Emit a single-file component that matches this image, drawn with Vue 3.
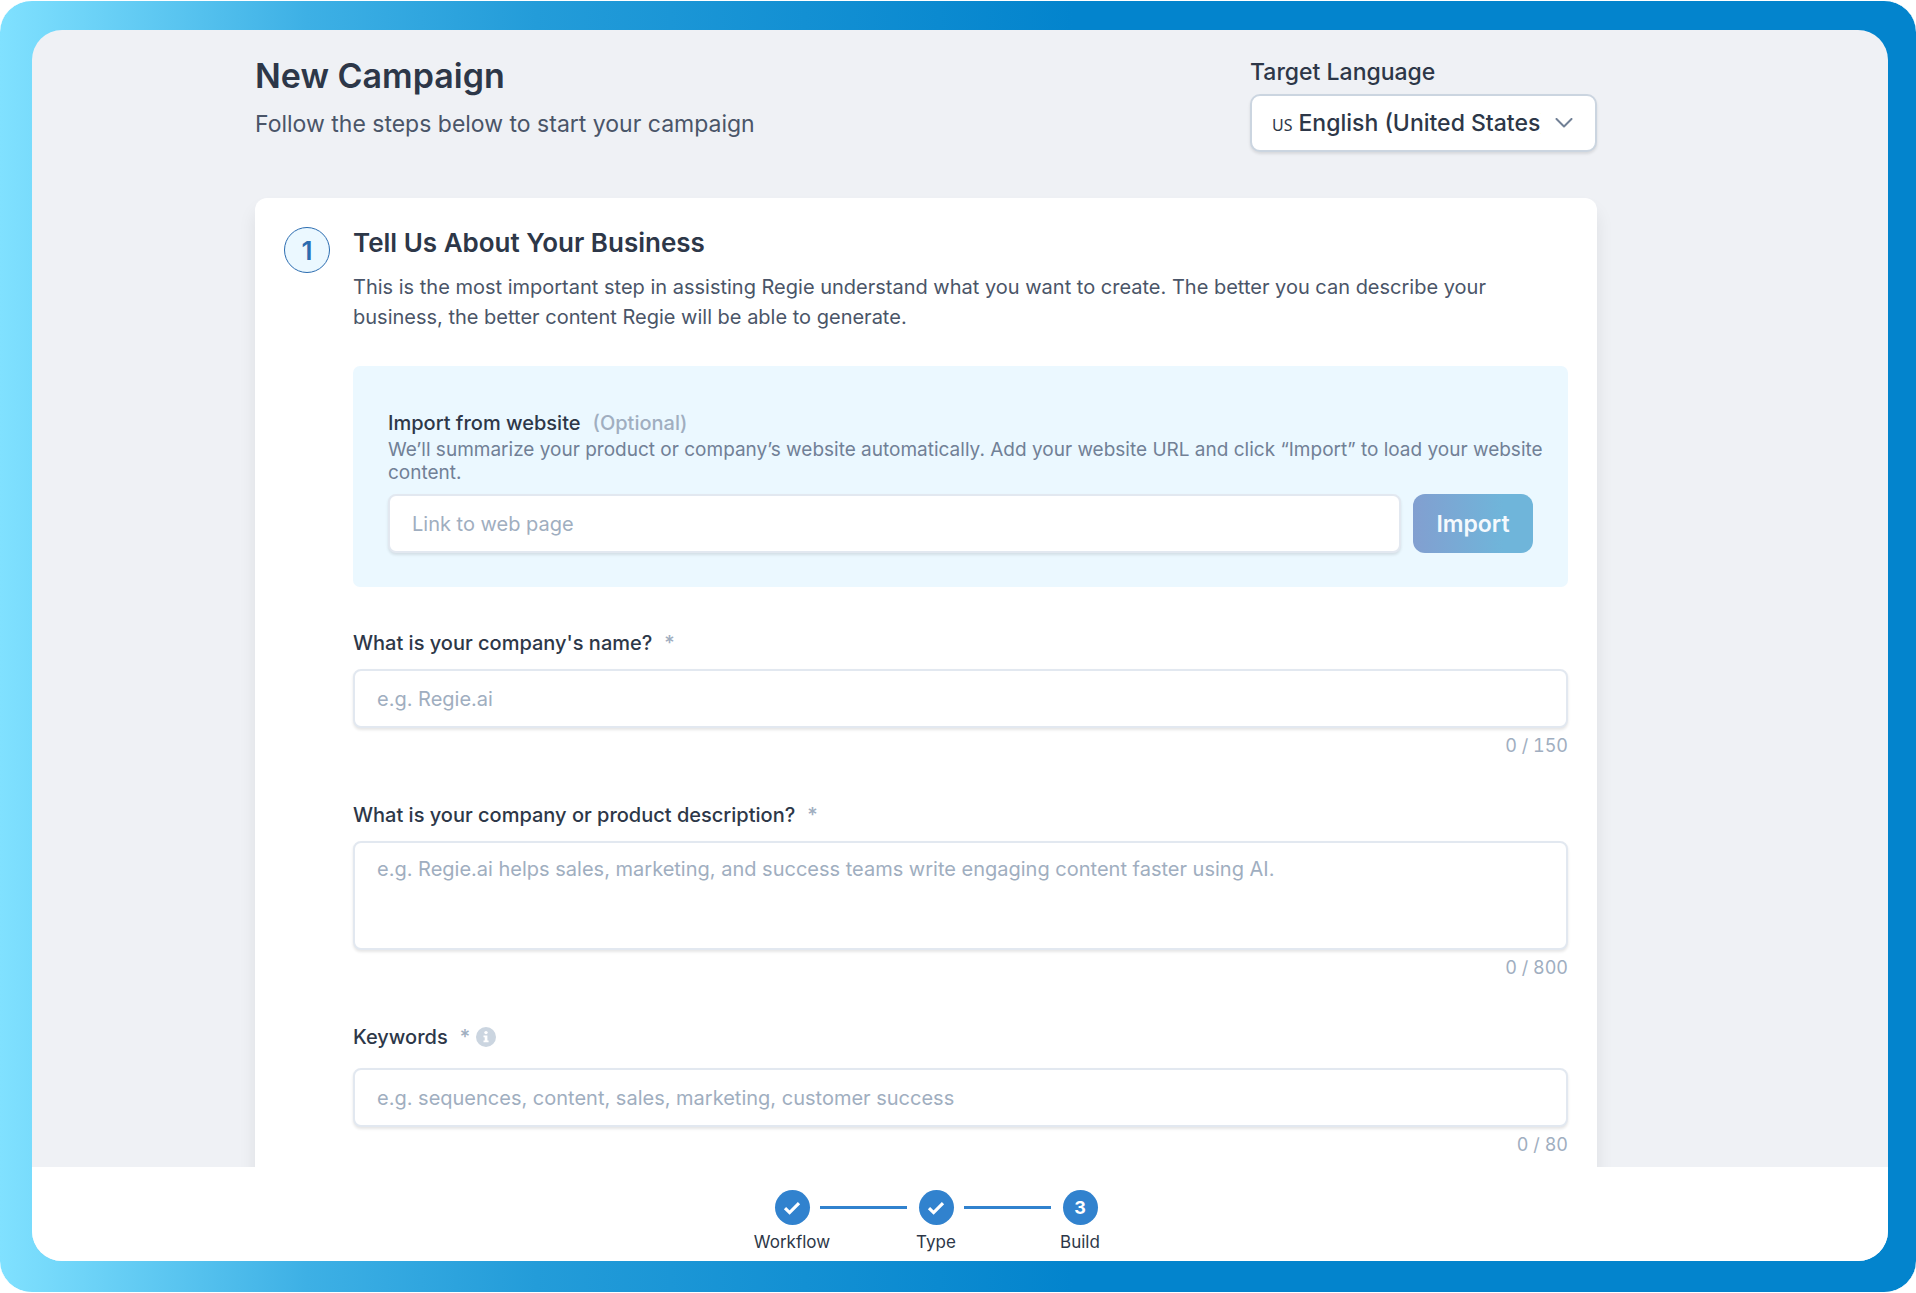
<script setup>
import { ref } from 'vue'

const language = ref('en-US')
const website = ref('')
const company = ref('')
const description = ref('')
const keywords = ref('')

const steps = [
  { label: 'Workflow', done: true },
  { label: 'Type', done: true },
  { label: 'Build', done: false },
]
</script>

<template>
  <div class="frame">
    <div class="window">
      <main class="content">
        <header class="page-head">
          <div>
            <h1>New Campaign</h1>
            <p class="subtitle">Follow the steps below to start your campaign</p>
          </div>
          <div class="language">
            <label for="language">Target Language</label>
            <div class="select-box">
              <span class="region">US</span>
              <select id="language" v-model="language">
                <option value="en-US">English (United States)</option>
                <option value="en-GB">English (United Kingdom)</option>
              </select>
              <svg class="chevron" viewBox="0 0 18 10" aria-hidden="true">
                <path d="M1.5 1 9 8.500 16.500 1" fill="none" stroke="currentColor" stroke-width="2" stroke-linecap="round" stroke-linejoin="round" />
              </svg>
            </div>
          </div>
        </header>

        <section class="card">
          <div class="number">1</div>
          <form class="form" @submit.prevent>
            <h2>Tell Us About Your Business</h2>
            <p class="intro">
              This is the most important step in assisting Regie understand what you want to create. The better you can describe your business, the better content Regie will be able to generate.
            </p>

            <div class="import">
              <label for="website">Import from website <span class="muted">(Optional)</span></label>
              <p class="hint">
                We’ll summarize your product or company’s website automatically. Add your website URL and click “Import” to load your website content.
              </p>
              <div class="import-row">
                <input id="website" v-model="website" class="control" type="text" placeholder="Link to web page" />
                <button type="button">Import</button>
              </div>
            </div>

            <div class="field">
              <label for="company">What is your company's name? <span class="muted">*</span></label>
              <input id="company" v-model="company" class="control" type="text" maxlength="150" placeholder="e.g. Regie.ai" />
              <p class="count">{{ company.length }} / 150</p>
            </div>

            <div class="field">
              <label for="description">What is your company or product description? <span class="muted">*</span></label>
              <textarea id="description" v-model="description" class="control" maxlength="800" placeholder="e.g. Regie.ai helps sales, marketing, and success teams write engaging content faster using AI."></textarea>
              <p class="count">{{ description.length }} / 800</p>
            </div>

            <div class="field keywords">
              <label for="keywords">
                Keywords <span class="muted">*</span>
                <svg class="info" viewBox="0 0 20 20" aria-hidden="true">
                  <circle cx="10" cy="10" r="10" fill="#cbd5e0" />
                  <circle cx="10" cy="5.600" r="1.700" fill="#fff" />
                  <path d="M7.500 8.500h3.900v5h1.200v1.800H7.500v-1.800h1.200v-3.200H7.500z" fill="#fff" />
                </svg>
              </label>
              <input id="keywords" v-model="keywords" class="control" type="text" maxlength="80" placeholder="e.g. sequences, content, sales, marketing, customer success" />
              <p class="count">{{ keywords.length }} / 80</p>
            </div>
          </form>
        </section>
      </main>

      <footer>
        <ol class="steps">
          <li v-for="(step, i) in steps" :key="step.label">
            <span class="dot">
              <svg v-if="step.done" viewBox="0 0 18 14" aria-hidden="true">
                <path d="M2 7.200 6.600 11.600 16 2.200" fill="none" stroke="currentColor" stroke-width="3.200" />
              </svg>
              <template v-else>{{ i + 1 }}</template>
            </span>
            <span class="step-label">{{ step.label }}</span>
          </li>
        </ol>
      </footer>
    </div>
  </div>
</template>

<style>
body {
  margin: 0;
  background: #fff;
}
</style>

<style scoped>
* {
  box-sizing: border-box;
}

.frame {
  height: 100vh;
  padding: 29px 28px 31px 32px;
  border: solid #fff;
  border-width: 1px 0;
  border-radius: 32px;
  background: linear-gradient(90deg, #80e1ff 0, #3db0e5 16%, #239cd9 28%, #0384cd 56%, #0384cd 100%);
  font-family: Inter, "Liberation Sans", sans-serif;
  color: #2d3748;
}

.window {
  display: flex;
  flex-direction: column;
  height: 100%;
  border-radius: 30px;
  background: #eff1f5;
  overflow: hidden;
}

h1,
h2,
p,
ol {
  margin: 0;
}

.content {
  flex: 1;
  min-height: 0;
  padding: 24px 291px 0 223px;
  overflow: hidden;
}

.page-head {
  display: flex;
  justify-content: space-between;
  margin-bottom: 46px;
}

h1 {
  font-size: 34px;
  font-weight: 600;
  line-height: 44px;
}

.subtitle {
  margin-top: 9px;
  font-size: 23px;
  line-height: 34px;
  color: #4a5568;
}

.language {
  width: 347px;
}

.language label {
  display: block;
  padding-top: 2px;
  font-size: 23px;
  font-weight: 500;
  line-height: 32px;
}

.select-box {
  display: flex;
  align-items: center;
  height: 58px;
  margin-top: 6px;
  padding: 0 22px 0 20px;
  border: 2px solid #cbd5e0;
  border-radius: 10px;
  background: #fff;
  box-shadow: 0 2px 3px rgba(0, 0, 0, 0.1);
}

.region {
  padding-top: 3px;
  font-family: "Noto Sans", sans-serif;
  font-size: 16px;
}

select {
  flex: 1;
  min-width: 0;
  margin-left: 6px;
  padding: 0;
  border: 0;
  background: none;
  appearance: none;
  overflow: hidden;
  font: 500 23px/32px Inter, sans-serif;
  color: inherit;
}

.chevron {
  width: 18px;
  height: 10px;
  margin-left: 14px;
  color: #718096;
}

.card {
  display: flex;
  gap: 23px;
  padding: 29px;
  border-radius: 12px;
  background: #fff;
  box-shadow: 0 12px 18px rgba(0, 0, 0, 0.08);
}

.number {
  flex: none;
  width: 46px;
  height: 46px;
  border: 1px solid #2b6cb0;
  border-radius: 50%;
  background: #ebf8ff;
  font-size: 26px;
  font-weight: 600;
  line-height: 46px;
  text-align: center;
  color: #2b6cb0;
}

.form {
  flex: 1;
  min-width: 0;
}

h2 {
  font-size: 26px;
  font-weight: 600;
  line-height: 32px;
}

.intro {
  margin-top: 13px;
  font-size: 20px;
  line-height: 30px;
  color: #4a5568;
}

.import {
  margin: 34px 0 41px;
  padding: 42px 35px 34px;
  border-radius: 7px;
  background: #ebf8ff;
}

.import label,
.field label {
  display: flex;
  align-items: center;
  font-size: 20px;
  font-weight: 500;
  line-height: 30px;
}

.muted {
  margin-left: 12px;
  color: #a0aec0;
}

.hint {
  margin-right: -16px;
  font-size: 19px;
  line-height: 23px;
  color: #718096;
}

.import-row {
  display: flex;
  gap: 12px;
  margin-top: 10px;
}

.control {
  display: block;
  width: 100%;
  height: 59px;
  padding: 0 22px;
  border: 2px solid #e2e8f0;
  border-radius: 8px;
  background: #fff;
  box-shadow: 0 2px 3px rgba(0, 0, 0, 0.1);
  font: 400 20px/30px Inter, sans-serif;
  color: inherit;
}

.control::placeholder {
  color: #a0aec0;
}

textarea.control {
  height: 109px;
  padding-top: 11px;
  resize: none;
}

button {
  flex: none;
  width: 120px;
  height: 59px;
  padding: 0;
  border: 0;
  border-radius: 12px;
  background: linear-gradient(90deg, #829fd0, #6fb5da 75%);
  font: 600 23px/32px Inter, sans-serif;
  color: #f4f9fd;
}

.field {
  margin-bottom: 42px;
}

.field label {
  margin-bottom: 11px;
}

.keywords label {
  margin-bottom: 16px;
}

.info {
  width: 20px;
  height: 20px;
  margin-left: 6px;
}

.count {
  margin-top: 6px;
  font-size: 18px;
  font-variant-numeric: tabular-nums;
  line-height: 24px;
  text-align: right;
  color: #a0aec0;
}

footer {
  display: flex;
  justify-content: center;
  padding: 23px 48px 7px 0;
  background: #fff;
}

.steps {
  display: flex;
  padding: 0;
  list-style: none;
}

.steps li {
  position: relative;
  display: flex;
  flex-direction: column;
  align-items: center;
  width: 144px;
}

/* Connector between neighbouring dots */
.steps li + li::before {
  content: "";
  position: absolute;
  top: 16px;
  right: 101px;
  width: 87px;
  height: 3px;
  background: #3182ce;
}

.dot {
  display: flex;
  align-items: center;
  justify-content: center;
  width: 35px;
  height: 35px;
  border-radius: 50%;
  background: #3182ce;
  font-size: 18px;
  font-weight: 700;
  color: #fff;
}

.dot svg {
  width: 18px;
  height: 14px;
}

.step-label {
  margin-top: 5px;
  font-size: 17px;
  line-height: 24px;
}
</style>
